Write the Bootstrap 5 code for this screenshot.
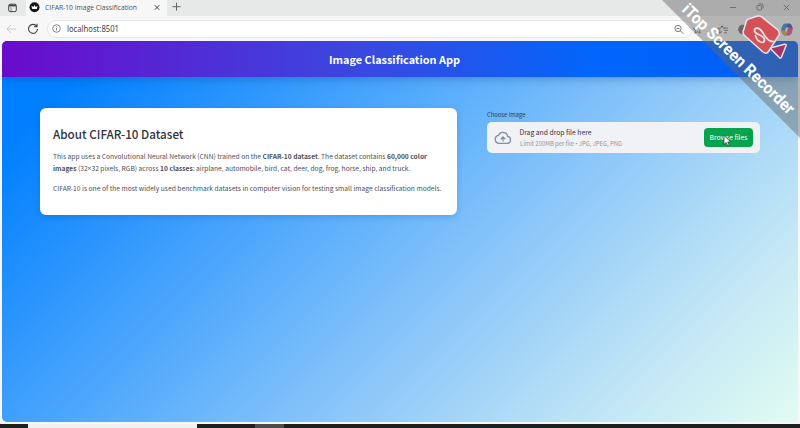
<!DOCTYPE html>
<html lang="en">
<head>
<meta charset="utf-8">
<title>CIFAR-10 Image Classification</title>
<link href="https://cdn.jsdelivr.net/npm/bootstrap@5.3.0/dist/css/bootstrap.min.css" rel="stylesheet">
<style>
body{height:428px;background:#f7f7f8;font-family:"Noto Sans CJK SC","Noto Sans",sans-serif;color:#31333f}
svg{display:block;flex:none;overflow:visible}
.tabs{height:16px;background:#e7e8e8;font:8.2px/16px "Open Sans","Noto Sans",sans-serif}
.tab-lead{width:26px}
.tab-on{width:141px;background:#f7f7f8;padding:0 4px 0 3px;color:#4b4b4b}
.tab-title{margin-left:5px;width:109px;white-space:nowrap;font-size:7.2px}
.toolbar{height:25px;padding-left:5px}
.address{margin-left:6px;width:646px;height:18px;background:#fff;border:1px solid #e7e7e9;font:8.2px "Noto Sans",sans-serif;color:#444;padding:0 4px}
.viewport{height:381px;margin:0 2px;border-radius:5px;background:linear-gradient(135deg,#007fff 9%,#8fc9f9 62%,#c4e8f5 84%,#e2fcf2)}
.app-head{height:36px;background:linear-gradient(90deg,#6a0bcb,#3a48e0 45%,#0066fb 75%,#005cf4);color:#fff;font-weight:700;font-size:10.7px;box-shadow:0 2px 8px rgba(20,60,130,.34)}
.app-head svg{margin-right:11px}
.content{padding:31px 38px 0}
.about{width:417px;height:107px;border-radius:6px;padding:17px 13px 0;box-shadow:0 2px 6px rgba(0,50,120,.18)}
.about h2{font-size:12.3px;line-height:18px;font-weight:500;margin:0 0 8px;white-space:nowrap}
.about p{font-size:6.75px;line-height:11.5px;margin:0 0 8.5px;white-space:nowrap}
.upload{width:273px;margin-left:30px;padding-top:1px}
.upload-label{font-size:6.2px;line-height:10px;color:#293e5d;margin-bottom:3px}
.drop{height:31px;background:#f0f2f6;border-radius:5px;padding:0 7px}
.drop-title{font-size:7px;line-height:11px}
.drop-note{font-size:6px;line-height:10px;color:#92949c}
.browse{width:49px;height:19px;border-radius:4px;background:#08a34d;color:#fff;font-size:6.8px;line-height:19px;padding:0;border:0}
.taskbar{height:4px;margin-top:2px;background:#1c2020}
.task-search{margin-left:28px;width:169px;background:#f1f1f1}
.task-item{margin-left:58px;width:29px;background:#4a4d4e}
.overlay{left:0;top:0;pointer-events:none}
</style>
</head>
<body class="overflow-hidden position-relative">
<header class="tabs d-flex">
  <div class="tab-lead d-flex align-items-center ps-2"><svg width="9" height="9" viewBox="0 0 9 9" fill="none" stroke="#444"><rect x=".7" y=".2" width="7.6" height="7.4" rx="1.4"/><path d="M1 1.500h7" stroke-width="1.8"/><path d="M3 3v4.500" stroke-width=".6"/></svg></div>
  <div class="tab-on d-flex align-items-center">
    <svg width="11" height="16" viewBox="0 0 11 16"><circle cx="5.5" cy="7.2" r="5" fill="#171717"/><path d="M2.4 5.8 4.3 7l1.2-2 1.2 2 1.9-1.2-.8 3.2H3.2z" fill="#fff"/></svg>
    <span class="tab-title"><svg width="108" height="16"><text x="0" y="10" textLength="92" lengthAdjust="spacingAndGlyphs" font-size="7.7" fill="#505050">CIFAR-10 Image Classification</text></svg></span>
    <svg width="6" height="6" viewBox="0 0 6 6" stroke="#333" stroke-width=".9"><path d="m.7.2 4.6 4.6M5.3.2.7 4.8"/></svg>
  </div>
  <svg class="ms-1" width="11" height="14" viewBox="0 0 11 14" stroke="#555" stroke-width=".9"><path d="M1.5 6.7h8M5.5 2.7v8"/></svg>
</header>
<div class="toolbar d-flex align-items-center">
  <svg width="12" height="12" viewBox="0 0 12 12" fill="none" stroke="#c5c5c8" stroke-width=".9"><path d="M11 6H2M6 2 2 6l4 4"/></svg>
  <svg class="ms-2" width="16" height="12" viewBox="0 0 16 12" fill="none" stroke="#444" stroke-width="1.1"><path d="M11.7 3.3A4.5 4.5 0 1 0 12.5 6M12 .8v3H9"/></svg>
  <div class="address rounded-pill d-flex align-items-center">
    <svg width="9" height="9" viewBox="0 0 9 9" fill="none" stroke="#555" stroke-width=".7"><circle cx="4.5" cy="4.5" r="3.8"/><path d="M4.5 4v2.6M4.5 2.2v.8"/></svg>
    <svg class="ms-1" width="70" height="16"><text x="2" y="11.3" fill="#444" textLength="52" lengthAdjust="spacingAndGlyphs">localhost:8501</text></svg>
  </div>
</div>
<main class="viewport overflow-hidden">
  <div class="app-head d-flex align-items-center justify-content-center">
    <svg width="132" height="22"><text x="0" y="15.5" fill="#fff" textLength="131" lengthAdjust="spacingAndGlyphs">Image Classification App</text></svg>
  </div>
  <div class="content d-flex">
    <section class="about bg-white">
      <h2><svg width="140" height="18"><text x="0" y="14" fill="#31333f" textLength="130.5" lengthAdjust="spacingAndGlyphs">About CIFAR-10 Dataset</text></svg></h2>
      <p><svg width="391" height="23" fill="#4c4e58"><text x="0" y="7.7" textLength="374" lengthAdjust="spacingAndGlyphs">This app uses a Convolutional Neural Network (CNN) trained on the <tspan font-weight="700">CIFAR-10 dataset</tspan>. The dataset contains <tspan font-weight="700">60,000 color</tspan></text><text x="0" y="19.6" textLength="357.5" lengthAdjust="spacingAndGlyphs"><tspan font-weight="700">images</tspan> (32<tspan font-family="Open Sans">×</tspan>32 pixels, RGB) across <tspan font-weight="700">10 classes</tspan>: airplane, automobile, bird, cat, deer, dog, frog, horse, ship, and truck.</text></svg></p>
      <p><svg width="391" height="12"><text x="0" y="8" fill="#4c4e58" textLength="388.5" lengthAdjust="spacingAndGlyphs">CIFAR-10 is one of the most widely used benchmark datasets in computer vision for testing small image classification models.</text></svg></p>
    </section>
    <section class="upload">
      <div class="upload-label"><svg width="42" height="10"><text x="0" y="7.5" fill="#293e5d" textLength="38.5" lengthAdjust="spacingAndGlyphs">Choose Image</text></svg></div>
      <div class="drop d-flex align-items-center">
        <svg width="18" height="14" viewBox="0 0 18 14" fill="none" stroke="#8291a6" stroke-width="1.35"><path d="M5 12.3a4 4 0 0 1-.6-7.9A4.9 4.9 0 0 1 13.7 5.4a3.5 3.5 0 0 1-.2 6.9zM9 10.4V6.2M6.8 8.2 9 6l2.2 2.2"/></svg>
        <div class="flex-grow-1 ms-2">
          <div class="drop-title"><svg width="100" height="11"><text x="-.5" y="8" fill="#31333f" textLength="72" lengthAdjust="spacingAndGlyphs">Drag and drop file here</text></svg></div>
          <div class="drop-note"><svg width="110" height="10"><text x="0" y="7.5" fill="#92949c" textLength="102" lengthAdjust="spacingAndGlyphs">Limit 200MB per file <tspan font-family="Open Sans">•</tspan> JPG, JPEG, PNG</text></svg></div>
        </div>
        <button class="browse btn" type="button">Browse files</button>
      </div>
    </section>
  </div>
</main>
<footer class="taskbar d-flex"><div class="task-search"></div><div class="task-item"></div></footer>
<!-- window controls, cursor and recorder ribbon float above the page -->
<svg class="overlay position-absolute" width="800" height="428" viewBox="0 0 800 428" fill="none">
  <g stroke="#555" stroke-width=".8">
    <path d="M730 7.5h6M783.8 4.8l5.4 5.4M789.2 4.8l-5.4 5.4"/>
    <rect x="757" y="5.5" width="4.5" height="4.5" rx="1"/><path d="M758.5 4h3q1.5 0 1.5 1.5v3"/>
    <circle cx="678" cy="28.5" r="3.1"/><path d="m680.3 30.8 2.9 2.9M676.5 28.5h3"/>
    <path d="m697.5 25.5 1.2 2.6 2.9.3-2.1 2 .6 2.8-2.6-1.5-2.6 1.5.6-2.8-2.1-2 2.9-.3z"/>
    <path d="m722 25.5 1.2 2.6 1.4.2M722 25.5l-1.2 2.6-2.8.3 2 2-.6 2.8 2.6-1.5M724 28h4M724 30.4h4M724 32.8h3"/>
  </g>
  <circle cx="743" cy="29.5" r="4.8" fill="#6d6266"/>
  <g transform="translate(787 29.5)"><path d="M-5.8 1C-5-4-4-6-1-6h4L1-2-1 4h-3z" fill="#288bd4"/><path d="M5.8-1C5 4 4 6 1 6h-4l2-4 2-6h3z" fill="#d94f79"/><path d="M2-6c3 0 3 4 4 5L3-2-1-3z" fill="#493cba"/><path d="M-5.8 1h3L1 2-1 6c-3 0-4-1-4.8-5z" fill="#dda44a"/><path d="M-1-2h2L0 2h-2z" fill="#fff"/></g>
  <path d="M662 0H800V138z" fill="#666" fill-opacity=".46"/>
  <g stroke="#e4e4e8" stroke-width="1.5" stroke-linejoin="round" stroke-linecap="round">
    <path d="m748.500 19 8.500-2.800q2.800-.8 5 1l15.500 12.500q2.500 2.200 1.700 5L768.500 51.500q-2 3-5.500.5L744.5 35.500q-2-2-1.200-4.500l3-9.500q.6-1.900 2.200-2.500z" fill="#d45158"/>
    <path d="m772 47.500 12.500-3.200q2.200-.3 1.400 1.700l-4.500 11.200q-.8 1.700-2.100.3l-8-8q-1.200-1.400.7-2z" fill="#aa3365"/>
    <path d="M775 41.500C769 42.500 766 38 762 31.500c-3-5-8-4-7.500-.5.5 3 5 3.500 8 5.500 3 2.500 2.500 6-.5 6M755.500 35.500c1 4 3 6 6.500 7" stroke-width="1.7"/>
  </g>
  <text transform="translate(681 10.5) rotate(44.3)" font-family="Roboto,sans-serif" font-size="16.5" font-weight="700" fill="#fff" textLength="150" lengthAdjust="spacingAndGlyphs">iTop Screen Recorder</text>
  <path d="M724 135.5v9l2.2-2 1.5 3.3 1.5-.7-1.5-3.2h3z" fill="#fff" stroke="#333" stroke-width=".7"/>
</svg>
<script src="https://cdn.jsdelivr.net/npm/bootstrap@5.3.0/dist/js/bootstrap.bundle.min.js"></script>
</body>
</html>
